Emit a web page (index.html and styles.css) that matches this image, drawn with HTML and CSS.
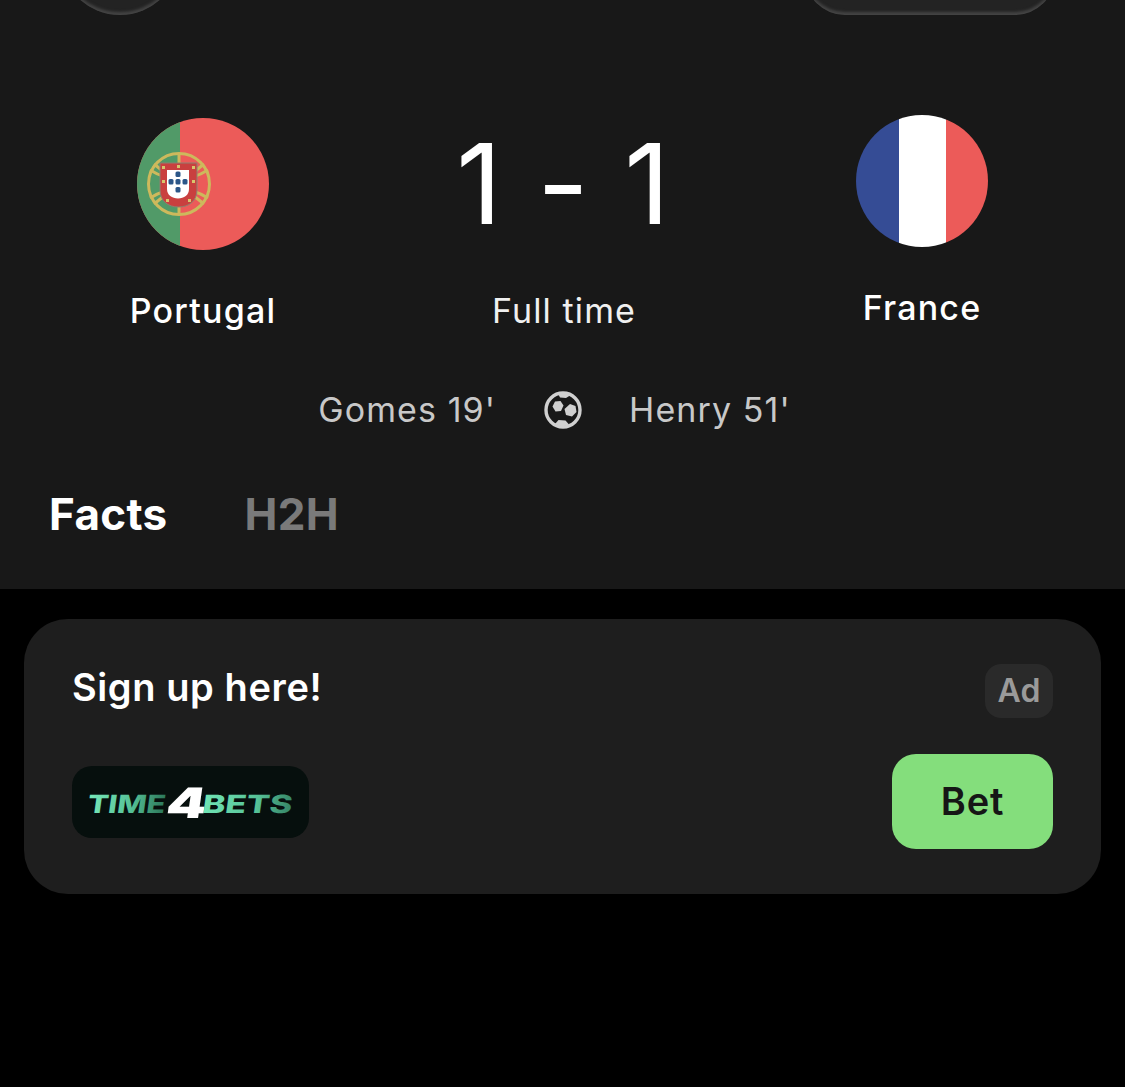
FILE: index.html
```html
<!DOCTYPE html>
<html lang="en">
<head>
<meta charset="utf-8">
<title>Portugal vs France</title>
<link rel="stylesheet" href="styles.css">
</head>
<body>
<section class="match">
  <div class="top-actions">
    <div class="round-btn"></div>
    <div class="pill-btn"></div>
  </div>
  <div class="score-row">
    <div class="team team-home">
      <svg class="flag" viewBox="0 0 132 132" role="img" aria-label="Portugal flag">
        <defs><clipPath id="disc"><circle cx="66" cy="66" r="66"/></clipPath></defs>
        <g clip-path="url(#disc)">
          <rect width="132" height="132" fill="#ec5b59"/>
          <rect width="43" height="132" fill="#519a68"/>
          <g fill="none" stroke="#cdb95c" stroke-width="3">
            <circle cx="42" cy="66" r="30.5"/>
            <path d="M13 52 Q42 70 71 52M13 80 Q42 62 71 80M17 46 L67 86M67 46 L17 86M42 36V96"/>
          </g>
          <path d="M23 45h37v27c0 11-8 17-18.500 17S23 83 23 72z" fill="#c9403f" stroke="#8d8070" stroke-width="1"/>
          <g fill="#d8c56c">
            <rect x="25" y="48" width="3" height="3"/>
            <rect x="40" y="47" width="3" height="3"/>
            <rect x="55" y="48" width="3" height="3"/>
            <rect x="25" y="62" width="3" height="3"/>
            <rect x="55" y="62" width="3" height="3"/>
            <rect x="29" y="81" width="3" height="3"/>
            <rect x="51" y="81" width="3" height="3"/>
          </g>
          <path d="M30 52h22v19c0 6-5 9.500-11 9.500S30 77 30 71z" fill="#fff"/>
          <g fill="#2b5688">
            <rect x="38.500" y="53.500" width="5" height="5.500" rx="1.500"/>
            <rect x="31.500" y="61" width="5" height="5.500" rx="1.500"/>
            <rect x="38.500" y="61" width="5" height="5.500" rx="1.500"/>
            <rect x="45.500" y="61" width="5" height="5.500" rx="1.500"/>
            <rect x="38.500" y="69" width="5" height="5.500" rx="1.500"/>
          </g>
        </g>
      </svg>
      <div class="team-name">Portugal</div>
    </div>
    <div class="result">
      <div class="score">1 - 1</div>
      <div class="status">Full time</div>
    </div>
    <div class="team team-away">
      <svg class="flag" viewBox="0 0 132 132" role="img" aria-label="France flag">
        <defs><clipPath id="disc2"><circle cx="66" cy="66" r="66"/></clipPath></defs>
        <g clip-path="url(#disc2)">
          <rect width="43" height="132" fill="#354c95"/>
          <rect x="43" width="47" height="132" fill="#fff"/>
          <rect x="90" width="42" height="132" fill="#ec5b59"/>
        </g>
      </svg>
      <div class="team-name">France</div>
    </div>
  </div>
  <div class="scorers">
    <span class="scorer scorer-home">Gomes 19'</span>
    <svg class="ball" viewBox="0 0 38 38" aria-hidden="true">
      <circle cx="19" cy="19" r="17" fill="none" stroke="#d0d0d0" stroke-width="3.400"/>
      <path d="M11 10.500l5.500-.5 3 4.500-2.500 5.500-5.500.5-3-5z" fill="#d0d0d0"/>
      <path d="M26 13l5.500 2 1 6-4.500 4.500-6-1.500-1.500-6z" fill="#d0d0d0"/>
      <path d="M14 2.500l10-.5 2 2.500-4 2.500-6-.5zM11 33l3.500-4 7 .5 3.500 4-6 2z" fill="#d0d0d0"/>
    </svg>
    <span class="scorer">Henry 51'</span>
  </div>
  <nav class="tabs">
    <span class="tab tab-active">Facts</span>
    <span class="tab">H2H</span>
  </nav>
</section>
<section class="ad">
  <div class="ad-row ad-head">
    <div class="ad-title">Sign up here!</div>
    <div class="ad-tag">Ad</div>
  </div>
  <div class="ad-row ad-foot">
    <svg class="logo" viewBox="0 0 237 72" role="img" aria-label="Time4Bets">
      <defs>
        <linearGradient id="g1" x1="0" x2="1" y1="0" y2="0">
          <stop offset="0" stop-color="#78e8b9"/><stop offset="0.55" stop-color="#56c297"/><stop offset="1" stop-color="#2b7558"/>
        </linearGradient>
        <linearGradient id="g2" x1="0" x2="1" y1="0" y2="0">
          <stop offset="0" stop-color="#70e4b4"/><stop offset="0.6" stop-color="#56c297"/><stop offset="1" stop-color="#358466"/>
        </linearGradient>
      </defs>
      <rect width="237" height="72" rx="20" fill="#060f0d"/>
      <text class="logo-small" transform="skewX(-8)" x="21" y="47" textLength="78" lengthAdjust="spacingAndGlyphs" fill="url(#g1)">TIME</text>
      <text class="logo-big" transform="skewX(-8)" x="100" y="52" textLength="40" lengthAdjust="spacingAndGlyphs" fill="#fff">4</text>
      <text class="logo-small" transform="skewX(-8)" x="136" y="47" textLength="90" lengthAdjust="spacingAndGlyphs" fill="url(#g2)">BETS</text>
    </svg>
    <div class="bet">Bet</div>
  </div>
</section>
</body>
</html>
```
FILE: styles.css
```css
* { box-sizing: border-box; }
html, body { margin: 0; padding: 0; }
body {
  width: 1125px;
  height: 1087px;
  overflow: hidden;
  background: #000;
  font-family: Inter, "Noto Sans", sans-serif;
  color: #fff;
}
.match {
  height: 589px;
  background: #181818;
  overflow: hidden;
}
.top-actions {
  height: 15px;
  display: flex;
  justify-content: space-between;
  align-items: flex-end;
  padding: 0 70px 0 60px;
}
.round-btn {
  flex: none;
  width: 120px;
  height: 120px;
  margin-top: -105px;
  border-radius: 50%;
  background: #232323;
  box-shadow: inset 0 -3px 3px #444;
}
.pill-btn {
  flex: none;
  width: 250px;
  height: 120px;
  margin-top: -105px;
  border-radius: 40px;
  background: #232323;
  box-shadow: inset 0 -3px 3px #444;
}
.score-row {
  display: grid;
  grid-template-columns: 406px 313px 406px;
  margin-top: 100px;
}
.team {
  display: flex;
  flex-direction: column;
  align-items: center;
}
.team-home { padding-top: 3px; }
.flag {
  display: block;
  width: 132px;
  height: 132px;
}
.team-name {
  margin-top: 40px;
  font-size: 34px;
  line-height: 41px;
  font-weight: 500;
  letter-spacing: 1.200px;
}
.result {
  display: flex;
  flex-direction: column;
  align-items: center;
  padding-left: 3px;
}
.score {
  height: 136px;
  font-size: 112px;
  line-height: 136px;
  font-weight: 400;
  white-space: pre;
  letter-spacing: 2px;
}
.status {
  margin-top: 39px;
  font-size: 34px;
  line-height: 41px;
  color: #f0f0f0;
  letter-spacing: 1.100px;
}
.scorers {
  display: flex;
  align-items: center;
  justify-content: center;
  margin-top: 58px;
  padding-right: 16px;
  height: 41px;
  font-size: 34px;
  color: #c8c8c8;
  letter-spacing: 1.100px;
}
.scorer-home { margin-right: 48px; }
.ball {
  flex: none;
  width: 38px;
  height: 38px;
  margin-right: 47px;
}
.tabs {
  display: flex;
  gap: 77px;
  margin-top: 58px;
  padding-left: 49px;
  font-size: 44px;
  line-height: 52px;
  font-weight: 700;
  letter-spacing: 0.300px;
}
.tab { color: #7a7a7a; }
.tab-active { color: #fff; }
.ad {
  width: 1077px;
  height: 275px;
  margin: 30px 0 0 24px;
  padding: 45px 48px 45px 48px;
  border-radius: 44px;
  background: #1e1e1e;
  display: flex;
  flex-direction: column;
  justify-content: space-between;
}
.ad-row {
  display: flex;
  justify-content: space-between;
  align-items: center;
}
.ad-head { align-items: flex-start; }
.ad-title {
  font-size: 38px;
  line-height: 46px;
  font-weight: 600;
  letter-spacing: 0.600px;
}
.ad-tag {
  width: 68px;
  height: 54px;
  padding-bottom: 2px;
  border-radius: 16px;
  background: #2a2a2a;
  color: #9a9a9a;
  font-size: 32px;
  font-weight: 600;
  display: flex;
  align-items: center;
  justify-content: center;
}
.logo {
  display: block;
  width: 237px;
  height: 72px;
}
.logo-small {
  font-family: Inter, sans-serif;
  font-weight: 800;
  font-size: 25px;
}
.logo-big {
  font-family: Inter, sans-serif;
  font-weight: 900;
  font-size: 42px;
}
.bet {
  width: 161px;
  height: 95px;
  padding-bottom: 2px;
  border-radius: 24px;
  background: #84de7c;
  color: #161616;
  font-size: 38px;
  font-weight: 600;
  letter-spacing: 0.800px;
  display: flex;
  align-items: center;
  justify-content: center;
}
```
